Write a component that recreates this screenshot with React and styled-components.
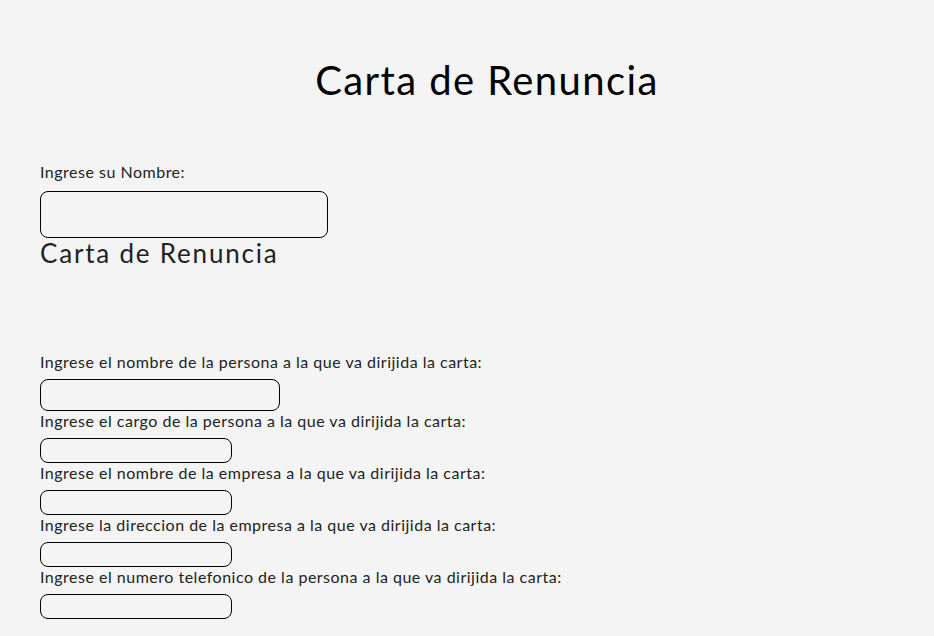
import React from "react";
import styled, { createGlobalStyle } from "styled-components";

const GlobalStyle = createGlobalStyle`
  body {
    margin: 0;
    background: #f4f4f4;
    font-family: Lato, "Open Sans", sans-serif;
    color: #222;
  }
`;

const Page = styled.div`
  padding: 0 0 20px 40px;
`;

const Title = styled.h1`
  margin: 0;
  padding-top: 56px;
  text-align: center;
  font-size: 40px;
  font-weight: 400;
  line-height: 48px;
  letter-spacing: 1.4px;
  color: #000;
`;

const Form = styled.form`
  display: flex;
  flex-direction: column;
  align-items: flex-start;
  padding-top: 58px;
`;

const Label = styled.label`
  display: block;
  font-size: 16px;
  line-height: 19px;
  letter-spacing: 0.5px;
  margin-bottom: ${(p) => p.$gap || 8}px;
`;

const Input = styled.input`
  box-sizing: border-box;
  width: ${(p) => p.$w}px;
  height: ${(p) => p.$h}px;
  border: 1px solid #000;
  border-radius: 8px;
  background: transparent;
  margin: 0;
  padding: 0 8px;
`;

const Subtitle = styled.h2`
  margin: 0 0 84px;
  font-size: 26px;
  font-weight: 400;
  line-height: 30px;
  letter-spacing: 1.8px;
  color: #222;
`;

const fields = [
  { label: "Ingrese el nombre de la persona a la que va dirijida la carta:", w: 240, h: 32 },
  { label: "Ingrese el cargo de la persona a la que va dirijida la carta:", w: 192, h: 25 },
  { label: "Ingrese el nombre de la empresa a la que va dirijida la carta:", w: 192, h: 25 },
  { label: "Ingrese la direccion de la empresa a la que va dirijida la carta:", w: 192, h: 25 },
  { label: "Ingrese el numero telefonico de la persona a la que va dirijida la carta:", w: 192, h: 25 },
];

export default function App() {
  return (
    <Page>
      <GlobalStyle />
      <Title>Carta de Renuncia</Title>
      <Form>
        <Label $gap={10}>Ingrese su Nombre:</Label>
        <Input $w={288} $h={47} />
        <Subtitle>Carta de Renuncia</Subtitle>
        {fields.map((f) => (
          <React.Fragment key={f.label}>
            <Label>{f.label}</Label>
            <Input $w={f.w} $h={f.h} />
          </React.Fragment>
        ))}
      </Form>
    </Page>
  );
}
